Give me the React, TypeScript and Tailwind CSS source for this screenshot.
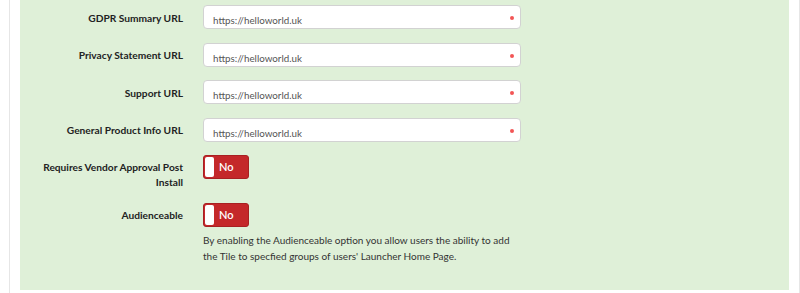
const FONT = "font-['Lato','Segoe_UI',sans-serif]";

function UrlRow({ label }: { label: string }) {
  return (
    <div className="flex items-start">
      <label className="ml-[13px] w-[150px] shrink-0 pt-[5.5px] text-right text-[10.2px] leading-[15px] font-bold text-[#222]">
        {label}
      </label>
      <div className="relative ml-[20px] h-[24px] w-[318px] rounded-[4px] border border-[#d2d2d2] bg-white">
        <input
          type="text"
          readOnly
          defaultValue="https://helloworld.uk"
          className="h-full w-full bg-transparent pb-[1px] pl-[9px] pr-[20px] text-[9.8px] text-[#555] outline-none"
        />
        <span className="absolute top-[10px] right-[6px] h-[4px] w-[4px] rounded-full bg-[#f25555]" />
      </div>
    </div>
  );
}

function Toggle() {
  return (
    <div className="ml-[20px] flex h-[24px] w-[46px] items-center gap-[5px] rounded-[3px] border border-[#a82022] bg-[#c4282a] p-[1px]">
      <span className="h-full w-[9px] rounded-[2px] bg-white" />
      <span className="text-[11px] leading-none font-semibold text-white">No</span>
    </div>
  );
}

export default function App() {
  return (
    <div className={`flex h-[293px] w-[800px] bg-white ${FONT}`}>
      <div className="ml-[9px] flex w-[791px] border-x border-[#e6e6e6] px-[10px] pb-[3px]">
        <div className="flex h-full w-full flex-col bg-[#dff0d8] pt-[5px]">
          <div className="flex flex-col gap-[13.5px]">
            <UrlRow label="GDPR Summary URL" />
            <UrlRow label="Privacy Statement URL" />
            <UrlRow label="Support URL" />
            <UrlRow label="General Product Info URL" />
          </div>

          <div className="mt-[13px] flex items-start">
            <label className="ml-[13px] w-[150px] shrink-0 pt-[5px] text-right text-[10.2px] leading-[15px] font-bold text-[#222]">
              Requires Vendor Approval Post Install
            </label>
            <Toggle />
          </div>

          <div className="mt-[13px] flex items-start">
            <label className="ml-[13px] w-[150px] shrink-0 pt-[5px] text-right text-[10.2px] leading-[15px] font-bold text-[#222]">
              Audienceable
            </label>
            <div className="flex flex-col">
              <Toggle />
              <p className="mt-[5px] ml-[20px] w-[318px] text-[10px] leading-[16.5px] text-[#333]">
                By enabling the Audienceable option you allow users the ability to add the Tile to specfied groups of users' Launcher Home Page.
              </p>
            </div>
          </div>
        </div>
      </div>
    </div>
  );
}
